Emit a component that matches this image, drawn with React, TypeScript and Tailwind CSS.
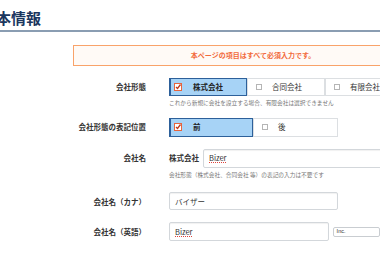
import React from "react";

const jp = { fontFamily: '"Noto Sans CJK JP", "Noto Sans", sans-serif' };

function CheckOn() {
  return (
    <svg width="8" height="8" viewBox="0 0 8 8" className="shrink-0">
      <rect x="0.5" y="0.5" width="7" height="7" fill="#fff" stroke="#e8643c" strokeWidth="1" />
      <path d="M2 4 L3.5 5.5 L6.5 1.5" fill="none" stroke="#c2391b" strokeWidth="1.3" />
    </svg>
  );
}

function CheckOff() {
  return <span className="block w-[6px] h-[6px] border border-[#b5b5b5] bg-white shrink-0" />;
}

function Label({ children }: { children: React.ReactNode }) {
  return (
    <div className="w-[146px] shrink-0 text-right text-[7.5px] font-bold text-[#333] leading-none">
      {children}
    </div>
  );
}

export default function App() {
  return (
    <div className="w-[380px] h-[254px] overflow-hidden bg-white relative" style={jp}>
      <div className="h-[30px] pt-[10px]">
        <div className="ml-[-19px] text-[15px] font-bold leading-[15px] text-[#1b365e] whitespace-nowrap">基本情報</div>
      </div>
      <div className="h-[2px] bg-[#8a9db2]" />

      <div className="mt-[13px] ml-[73px] w-[360px] h-[21px] border border-[#f9a36a] bg-[#fffaf6] flex items-center justify-center">
        <span className="text-[7px] font-bold text-[#f26a3c] leading-none">本ページの項目はすべて必須入力です。</span>
      </div>

      {/* 会社形態 */}
      <div className="mt-[12px] flex items-center">
        <Label>会社形態</Label>
        <div className="ml-[23px] flex h-[18px] whitespace-nowrap">
          <div className="w-[78px] flex items-center gap-[11px] pl-[3px] bg-[#a7d3f6] border border-[#2d609a] border-l-2">
            <CheckOn />
            <span className="text-[7.5px] font-bold text-[#222] leading-none">株式会社</span>
          </div>
          <div className="w-[78px] flex items-center gap-[10px] pl-[8px] bg-white border border-[#dcdfe2]">
            <CheckOff />
            <span className="text-[7.5px] text-[#333] leading-none">合同会社</span>
          </div>
          <div className="w-[78px] flex items-center gap-[10px] pl-[8px] bg-white border border-[#dcdfe2]">
            <CheckOff />
            <span className="text-[7.5px] text-[#333] leading-none">有限会社</span>
          </div>
        </div>
      </div>
      <div className="ml-[169px] mt-[4px] text-[5.7px] text-[#777] leading-none whitespace-nowrap">
        これから新規に会社を設立する場合、有限会社は選択できません
      </div>

      {/* 表記位置 */}
      <div className="mt-[12px] flex items-center">
        <Label>会社形態の表記位置</Label>
        <div className="ml-[23px] flex h-[19px] whitespace-nowrap">
          <div className="w-[84px] flex items-center gap-[11px] pl-[3px] bg-[#a7d3f6] border border-[#2d609a] border-l-2">
            <CheckOn />
            <span className="text-[7.5px] font-bold text-[#222] leading-none">前</span>
          </div>
          <div className="w-[85px] flex items-center gap-[10px] pl-[8px] bg-white border border-[#dcdfe2]">
            <CheckOff />
            <span className="text-[7.5px] text-[#333] leading-none">後</span>
          </div>
        </div>
      </div>

      {/* 会社名 */}
      <div className="mt-[12px] flex items-center">
        <Label>会社名</Label>
        <div className="ml-[23px] flex items-center whitespace-nowrap">
          <span className="text-[7.5px] font-bold text-[#333] leading-none w-[34px]">株式会社</span>
          <div className="w-[200px] h-[19px] flex items-center pl-[5px] bg-white border border-[#d3d7db] rounded-[2px] shadow-[inset_0_1px_1px_rgba(0,0,0,0.06)]">
            <span className="text-[7.5px] text-[#333] leading-none underline decoration-dotted decoration-[#e0443b] decoration-1 underline-offset-[1px]">Bizer</span>
          </div>
        </div>
      </div>
      <div className="ml-[169px] mt-[4px] text-[5.7px] text-[#777] leading-none whitespace-nowrap">
        会社形態（株式会社、合同会社 等）の表記の入力は不要です
      </div>

      {/* カナ */}
      <div className="mt-[15px] flex items-center">
        <Label>会社名（カナ）</Label>
        <div className="ml-[23px] w-[169px] h-[18px] flex items-center pl-[5px] bg-white border border-[#d3d7db] rounded-[2px] shadow-[inset_0_1px_1px_rgba(0,0,0,0.06)]">
          <span className="text-[7.5px] text-[#333] leading-none">バイザー</span>
        </div>
      </div>

      {/* 英語 */}
      <div className="mt-[12px] flex items-center">
        <Label>会社名（英語）</Label>
        <div className="ml-[23px] w-[169px] h-[19px] flex items-center pl-[5px] bg-white border border-[#d3d7db] rounded-[2px] shadow-[inset_0_1px_1px_rgba(0,0,0,0.06)]">
          <span className="text-[7.5px] text-[#333] leading-none underline decoration-dotted decoration-[#e0443b] decoration-1 underline-offset-[1px]">Bizer</span>
        </div>
        <div className="ml-[4px] w-[50px] h-[10px] flex items-center pl-[3px] bg-white border border-[#c9cdd1] rounded-[2px]">
          <span className="text-[5.5px] text-[#333] leading-none" style={{ fontFamily: '"Liberation Sans", sans-serif' }}>Inc.</span>
        </div>
      </div>
    </div>
  );
}
